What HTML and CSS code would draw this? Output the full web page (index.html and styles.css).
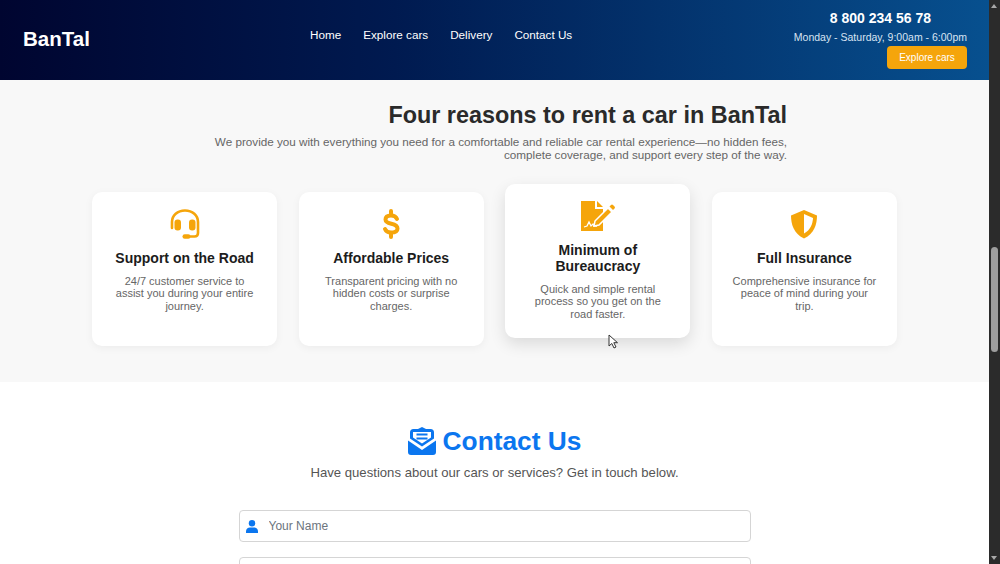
FILE: index.html
```html
<!DOCTYPE html>
<html lang="en">
<head>
    <meta charset="UTF-8">
    <meta name="viewport" content="width=device-width, initial-scale=1.0">
    <title>BanTal - Car Rental</title>
    <link rel="stylesheet" href="styles.css">
</head>
<body>
    <div class="page">
        <main class="content">
            <header class="topbar">
                <div class="logo">BanTal</div>
                <nav class="nav">
                    <a href="#">Home</a>
                    <a href="#">Explore cars</a>
                    <a href="#">Delivery</a>
                    <a href="#">Contact Us</a>
                </nav>
                <div class="top-contact">
                    <div class="phone">8 800 234 56 78</div>
                    <div class="hours">Monday - Saturday, 9:00am - 6:00pm</div>
                    <button class="btn-explore">Explore cars</button>
                </div>
            </header>

            <section class="reasons">
                <div class="reasons-head">
                    <h2>Four reasons to rent a car in BanTal</h2>
                    <p>We provide you with everything you need for a comfortable and reliable car rental experience—no hidden fees, complete coverage, and support every step of the way.</p>
                </div>
                <div class="cards">
                    <article class="card">
                        <svg class="card-icon" width="30" height="30" viewBox="0 0 30 30">
                            <path d="M2 19V13C2 6.500 7.500 1.500 15 1.500S28 6.500 28 13v11c0 2.500-1.500 3.500-3.500 3.500H18" fill="none" stroke="#f5a50b" stroke-width="2.600" stroke-linecap="round"/>
                            <rect x="4.500" y="10.500" width="6.500" height="11" rx="3" fill="#f5a50b"/>
                            <rect x="19" y="10.500" width="6.500" height="11" rx="3" fill="#f5a50b"/>
                            <rect x="12.500" y="25.200" width="8" height="4.500" rx="2.200" fill="#f5a50b"/>
                        </svg>
                        <h3>Support on the Road</h3>
                        <p>24/7 customer service to assist you during your entire journey.</p>
                    </article>
                    <article class="card">
                        <svg class="card-icon" width="30" height="30" viewBox="0 0 30 30">
                            <path d="M21 10c-1-2.500-3-3.500-6-3.500-3.500 0-5.500 1.500-5.500 4 0 6 12 2.500 12 9 0 2.500-2.500 4-6.500 4-3 0-5-1-6-3.500" fill="none" stroke="#f5a50b" stroke-width="4" stroke-linecap="round"/>
                            <path d="M15 2v4M15 24v4" stroke="#f5a50b" stroke-width="4" stroke-linecap="round"/>
                        </svg>
                        <h3>Affordable Prices</h3>
                        <p>Transparent pricing with no hidden costs or surprise charges.</p>
                    </article>
                    <article class="card card-hover">
                        <svg class="card-icon card-icon-wide" width="34" height="30" viewBox="0 0 34 30">
                            <path d="M0 0h14v8h8v22H0z" fill="#f5a50b"/>
                            <path d="M16 0l6 6h-6z" fill="#f5a50b"/>
                            <path d="M14 20L27 7l4 4-13 13-5 1z" fill="#f5a50b" stroke="#fff" stroke-width="1.500"/>
                            <path d="M28.500 5.500l1.500-1.500a1.500 1.500 0 0 1 2 0l1.500 1.500a1.500 1.500 0 0 1 0 2L32 9z" fill="#f5a50b"/>
                            <path d="M3 26l3-1 2-4 2 4 2-2 1 2 3 0" fill="none" stroke="#fff" stroke-width="1.300"/>
                        </svg>
                        <h3>Minimum of Bureaucracy</h3>
                        <p>Quick and simple rental process so you get on the road faster.</p>
                    </article>
                    <article class="card">
                        <svg class="card-icon" width="30" height="30" viewBox="0 0 30 30">
                            <path d="M15 1L2 6.500C2 15 4.500 24.500 15 29.500 25.500 24.500 28 15 28 6.500z" fill="#f5a50b"/>
                            <path d="M15 5v19.500c6.500-3.500 8.800-10 9-15.500z" fill="#fff"/>
                        </svg>
                        <h3>Full Insurance</h3>
                        <p>Comprehensive insurance for peace of mind during your trip.</p>
                    </article>
                </div>
            </section>

            <section class="contact">
                <h2 class="contact-title">
                    <svg width="28" height="28" viewBox="0 0 28 28">
                        <path d="M0 13.500L14 23l14-9.500V25a3 3 0 0 1-3 3H3a3 3 0 0 1-3-3z" fill="#0b76ef"/>
                        <path d="M2 11.500V5.500a3.500 3.500 0 0 1 3.500-3.500H10L14 0l4 2h4.500A3.500 3.500 0 0 1 26 5.500v6L14 19.500z" fill="#0b76ef"/>
                        <path d="M5 5h18v5.500L14 16.500 5 10.500z" fill="#fff"/>
                        <path d="M8.500 6.500h11v2h-11zM8.500 10.500h11v2h-11z" fill="#0b76ef"/>
                    </svg>
                    Contact Us
                </h2>
                <p class="contact-sub">Have questions about our cars or services? Get in touch below.</p>
                <form class="contact-form">
                    <label class="field">
                        <svg width="12" height="13" viewBox="0 0 12 13">
                            <circle cx="6" cy="3.200" r="3.200" fill="#0b76ef"/>
                            <path d="M0 13v-1.500C0 9 1.800 7.500 4 7.500h4c2.200 0 4 1.500 4 4V13z" fill="#0b76ef"/>
                        </svg>
                        <input type="text" placeholder="Your Name">
                    </label>
                    <label class="field">
                        <input type="text">
                    </label>
                </form>
            </section>
        </main>

        <aside class="scrollbar">
            <span class="arrow-up"></span>
            <span class="thumb"></span>
            <span class="arrow-down"></span>
        </aside>

        <svg class="cursor" width="11" height="15" viewBox="0 0 11 15">
            <path d="M1 1v11l2.800-2.500L6 14l2-1-2.200-4.300H9.500z" fill="#fff" stroke="#333" stroke-width="1"/>
        </svg>
    </div>
</body>
</html>
```

FILE: styles.css
```css
* {
    box-sizing: border-box;
}

body {
    margin: 0;
    font-family: "Liberation Sans", Arial, sans-serif;
    background: #fff;
}

.page {
    display: flex;
    height: 564px;
    overflow: hidden;
    position: relative;
}

.content {
    flex: 1;
    min-width: 0;
}

.topbar {
    height: 80px;
    display: flex;
    align-items: stretch;
    justify-content: space-between;
    padding: 0 22px 0 23px;
    background: linear-gradient(90deg, #000530 0%, #001a50 40%, #07508f 100%);
    color: #fff;
}

.logo {
    font-size: 20.500px;
    font-weight: 700;
    line-height: 78px;
    width: 287px;
}

.nav {
    display: flex;
    gap: 22px;
    padding-top: 28px;
    flex: 1;
}

.nav a {
    color: #fff;
    text-decoration: none;
    font-size: 11.700px;
    line-height: 14px;
}

.top-contact {
    display: flex;
    flex-direction: column;
    align-items: flex-end;
    padding-top: 10px;
}

.phone {
    font-size: 14px;
    font-weight: 700;
    line-height: 17px;
    margin-right: 36px;
}

.hours {
    font-size: 10.500px;
    line-height: 13px;
    margin-top: 4px;
    color: #d8e4f2;
}

.btn-explore {
    width: 80px;
    height: 23px;
    margin-top: 2px;
    padding: 0;
    border: none;
    border-radius: 4px;
    background: #f5a50b;
    color: #fff;
    font-family: inherit;
    font-size: 10px;
}

.reasons {
    height: 302px;
    padding: 21px 92px 0;
    background: #f8f8f8;
}

.reasons-head {
    text-align: right;
    padding-right: 110px;
}

.reasons-head h2 {
    margin: 0;
    font-size: 23.400px;
    line-height: 28px;
    color: #2a2a2a;
}

.reasons-head p {
    margin: 6px 0 0 auto;
    max-width: 590px;
    font-size: 11.700px;
    line-height: 13px;
    color: #666;
}

.cards {
    display: grid;
    grid-template-columns: repeat(4, 1fr);
    gap: 21.500px;
    margin-top: 31px;
}

.card {
    height: 154px;
    padding: 17px 19px 0;
    background: #fff;
    border-radius: 10px;
    box-shadow: 0 2px 8px rgba(0, 0, 0, 0.05);
    text-align: center;
}

.card-hover {
    transform: translateY(-8px);
    box-shadow: 0 6px 16px rgba(0, 0, 0, 0.12);
}

.card-icon {
    display: block;
    margin: 0 auto;
}

.card h3 {
    margin: 11px 0 0;
    font-size: 14px;
    line-height: 16px;
    color: #1c1c1c;
}

.card p {
    margin: 9px 0 0;
    font-size: 11px;
    line-height: 12.300px;
    color: #666;
}

.contact {
    padding-top: 43px;
    text-align: center;
}

.contact-title {
    display: flex;
    align-items: center;
    justify-content: center;
    gap: 7px;
    margin: 0;
    font-size: 26.300px;
    line-height: 32px;
    color: #0b76ef;
}

.contact-sub {
    margin: 7px 0 0;
    font-size: 13.150px;
    line-height: 17px;
    color: #555;
}

.contact-form {
    display: flex;
    flex-direction: column;
    gap: 15px;
    width: 512px;
    margin: 29px auto 0;
}

.field {
    display: flex;
    align-items: center;
    gap: 11px;
    flex: none;
    height: 32px;
    padding: 0 6px;
    border: 1px solid #d5d5d5;
    border-radius: 4px;
    background: #fff;
}

.field input {
    flex: 1;
    border: none;
    outline: none;
    padding: 0;
    font-family: inherit;
    font-size: 12px;
}

.field input::placeholder {
    color: #6c757d;
}

.scrollbar {
    flex: none;
    width: 11px;
    position: relative;
    background: #2b2b2b;
}

.thumb {
    position: absolute;
    left: 2px;
    top: 247px;
    width: 7px;
    height: 105px;
    border-radius: 4px;
    background: #9e9e9e;
}

.arrow-up,
.arrow-down {
    position: absolute;
    left: 2px;
    width: 0;
    height: 0;
    border-left: 3.500px solid transparent;
    border-right: 3.500px solid transparent;
}

.arrow-up {
    top: 4px;
    border-bottom: 4px solid #a8a8a8;
}

.arrow-down {
    bottom: 4px;
    border-top: 4px solid #a8a8a8;
}

.cursor {
    position: absolute;
    left: 608px;
    top: 334px;
}
```
